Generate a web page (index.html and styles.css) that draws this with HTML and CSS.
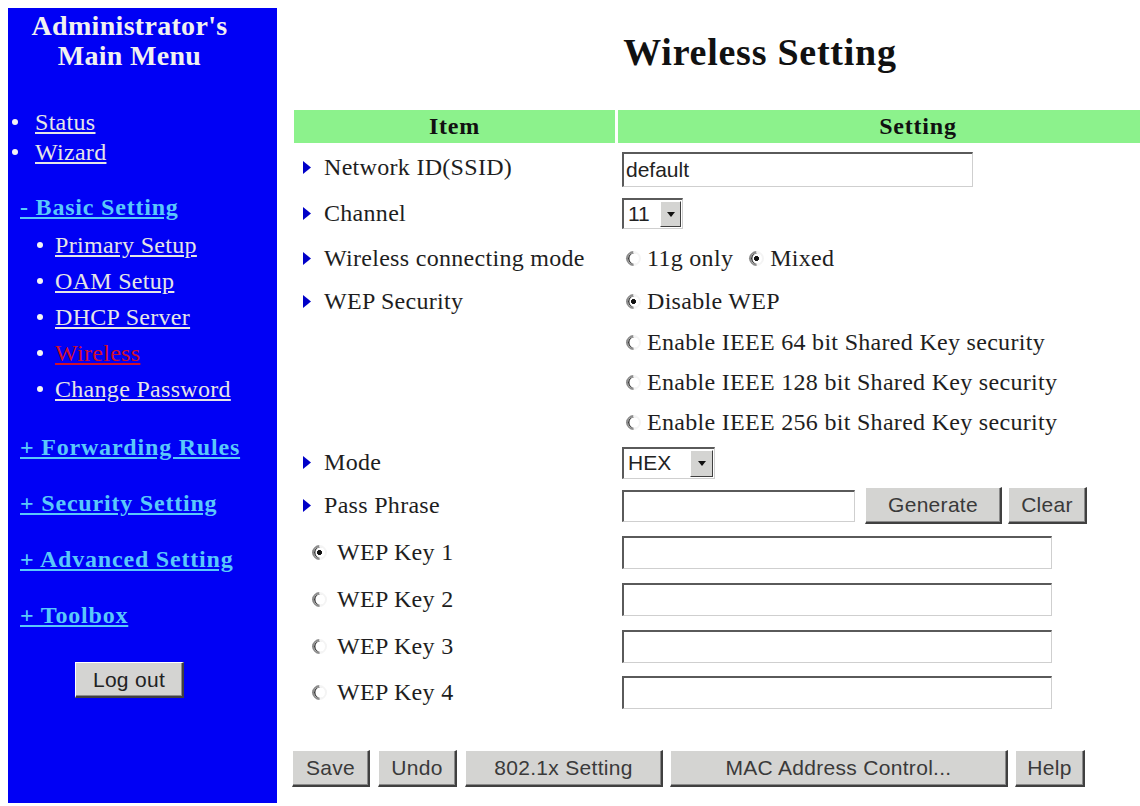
FILE: index.html
```html
<!DOCTYPE html>
<html>
<head>
<meta charset="utf-8">
<title>Wireless Setting</title>
<link rel="stylesheet" href="styles.css">
</head>
<body>
<div class="page">
  <nav class="side">
    <div class="side-inner">
      <h1 class="side-title">Administrator's<br>Main Menu</h1>
      <ul class="menu top-links">
        <li><span class="dot"></span><a href="#">Status</a></li>
        <li><span class="dot"></span><a href="#">Wizard</a></li>
      </ul>
      <a class="sect basic" href="#">- Basic Setting</a>
      <ul class="menu sub-links">
        <li><span class="dot"></span><a href="#">Primary Setup</a></li>
        <li><span class="dot"></span><a href="#">OAM Setup</a></li>
        <li><span class="dot"></span><a href="#">DHCP Server</a></li>
        <li><span class="dot"></span><a class="current" href="#">Wireless</a></li>
        <li><span class="dot"></span><a href="#">Change Password</a></li>
      </ul>
      <div class="sections">
        <a class="sect" href="#">+ Forwarding Rules</a>
        <a class="sect" href="#">+ Security Setting</a>
        <a class="sect" href="#">+ Advanced Setting</a>
        <a class="sect" href="#">+ Toolbox</a>
      </div>
      <div class="logout-wrap"><button class="btn logout" type="button">Log out</button></div>
    </div>
  </nav>

  <main class="main">
    <h2 class="title">Wireless Setting</h2>
    <div class="grid">
      <div class="row head"><div class="c1">Item</div><div class="c2">Setting</div></div>

      <div class="row h48">
        <div class="c1"><svg class="arrow" width="8" height="13" viewBox="0 0 8 13"><polygon points="0,0 8,6.5 0,13"/></svg>Network ID(SSID)</div>
        <div class="c2"><input class="field ssid" type="text" value="default"></div>
      </div>

      <div class="row h45">
        <div class="c1"><svg class="arrow" width="8" height="13" viewBox="0 0 8 13"><polygon points="0,0 8,6.5 0,13"/></svg>Channel</div>
        <div class="c2"><span class="select ch"><span class="sel-text">11</span><span class="sel-btn"><svg width="8" height="5" viewBox="0 0 8 5"><polygon points="0,0 8,0 4,5"/></svg></span></span></div>
      </div>

      <div class="row h44">
        <div class="c1"><svg class="arrow" width="8" height="13" viewBox="0 0 8 13"><polygon points="0,0 8,6.5 0,13"/></svg>Wireless connecting mode</div>
        <div class="c2">
          <label class="opt"><input class="radio" type="radio" name="gmode">11g only</label>
          <label class="opt"><input class="radio" type="radio" name="gmode" checked>Mixed</label>
        </div>
      </div>

      <div class="row h42">
        <div class="c1"><svg class="arrow" width="8" height="13" viewBox="0 0 8 13"><polygon points="0,0 8,6.5 0,13"/></svg>WEP Security</div>
        <div class="c2"><label class="opt"><input class="radio" type="radio" name="wep" checked>Disable WEP</label></div>
      </div>
      <div class="row h40">
        <div class="c1"></div>
        <div class="c2"><label class="opt"><input class="radio" type="radio" name="wep">Enable IEEE 64 bit Shared Key security</label></div>
      </div>
      <div class="row h40">
        <div class="c1"></div>
        <div class="c2"><label class="opt"><input class="radio" type="radio" name="wep">Enable IEEE 128 bit Shared Key security</label></div>
      </div>
      <div class="row h40">
        <div class="c1"></div>
        <div class="c2"><label class="opt"><input class="radio" type="radio" name="wep">Enable IEEE 256 bit Shared Key security</label></div>
      </div>

      <div class="row h41">
        <div class="c1"><svg class="arrow" width="8" height="13" viewBox="0 0 8 13"><polygon points="0,0 8,6.5 0,13"/></svg>Mode</div>
        <div class="c2"><span class="select hex"><span class="sel-text">HEX</span><span class="sel-btn"><svg width="8" height="5" viewBox="0 0 8 5"><polygon points="0,0 8,0 4,5"/></svg></span></span></div>
      </div>

      <div class="row h45">
        <div class="c1"><svg class="arrow" width="8" height="13" viewBox="0 0 8 13"><polygon points="0,0 8,6.5 0,13"/></svg>Pass Phrase</div>
        <div class="c2">
          <input class="field pass" type="text" value="">
          <button class="btn gen" type="button">Generate</button>
          <button class="btn clr" type="button">Clear</button>
        </div>
      </div>

      <div class="row h48">
        <div class="c1 key"><label class="opt"><input class="radio" type="radio" name="key" checked>WEP Key 1</label></div>
        <div class="c2"><input class="field key-in" type="text" value=""></div>
      </div>
      <div class="row h47">
        <div class="c1 key"><label class="opt"><input class="radio" type="radio" name="key">WEP Key 2</label></div>
        <div class="c2"><input class="field key-in" type="text" value=""></div>
      </div>
      <div class="row h46">
        <div class="c1 key"><label class="opt"><input class="radio" type="radio" name="key">WEP Key 3</label></div>
        <div class="c2"><input class="field key-in" type="text" value=""></div>
      </div>
      <div class="row h46">
        <div class="c1 key"><label class="opt"><input class="radio" type="radio" name="key">WEP Key 4</label></div>
        <div class="c2"><input class="field key-in" type="text" value=""></div>
      </div>
    </div>

    <div class="actions">
      <button class="btn b-save" type="button">Save</button>
      <button class="btn b-undo" type="button">Undo</button>
      <button class="btn b-8021x" type="button">802.1x Setting</button>
      <button class="btn b-mac" type="button">MAC Address Control...</button>
      <button class="btn b-help" type="button">Help</button>
    </div>
  </main>
</div>
</body>
</html>
```

FILE: styles.css
```css
html, body {
  margin: 0;
  padding: 0;
}
body {
  margin: 8px 0 0 8px;
  background: #ffffff;
  font-family: "Liberation Serif", "Times New Roman", serif;
  color: #1e1e1e;
}
.page {
  display: flex;
  align-items: flex-start;
}

/* ---------- sidebar ---------- */
.side {
  flex: none;
  width: 269px;
  height: 795px;
  background: #0000f5;
}
.side-inner {
  width: 243px;
  padding-top: 3px;
}
.side-title {
  margin: 0;
  font-size: 28px;
  line-height: 30px;
  font-weight: bold;
  text-align: center;
  letter-spacing: 0.3px;
  color: #f0f0f0;
}
.menu {
  list-style: none;
  margin: 0;
  padding: 0;
  font-size: 24px;
  letter-spacing: 0.3px;
}
.menu li {
  display: flex;
  align-items: center;
}
.menu a {
  color: #e6e6e6;
  text-decoration: underline;
}
.menu a.current {
  color: #d0102a;
}
.dot {
  flex: none;
  width: 6px;
  height: 6px;
  border-radius: 50%;
  background: #f4f4f4;
}
.top-links {
  margin-top: 36px;
}
.top-links li {
  height: 30px;
}
.top-links .dot {
  margin-left: 4px;
  margin-right: 17px;
}
.sect {
  display: block;
  margin-left: 12px;
  font-size: 24px;
  font-weight: bold;
  letter-spacing: 0.8px;
  color: #5ac8fa;
  text-decoration: underline;
}
.basic {
  margin-top: 25px;
  line-height: 30px;
}
.sub-links {
  margin-top: 5px;
}
.sub-links li {
  height: 36px;
}
.sub-links .dot {
  margin-left: 29px;
  margin-right: 12px;
}
.sections {
  margin-top: 12px;
}
.sections .sect {
  line-height: 56px;
}
.logout-wrap {
  margin-top: 19px;
  text-align: center;
}

/* ---------- buttons ---------- */
.btn {
  box-sizing: border-box;
  height: 37px;
  padding: 0;
  background: #d4d4d2;
  border-top: 1px solid #ffffff;
  border-left: 1px solid #ffffff;
  border-right: 2px solid #404040;
  border-bottom: 2px solid #404040;
  box-shadow: inset -1px -1px 0 #8a8a8a;
  font-family: "Liberation Sans", Arial, sans-serif;
  font-size: 21px;
  letter-spacing: 0.3px;
  color: #3a3a3a;
}
.logout {
  width: 109px;
  height: 36px;
  color: #222222;
}

/* ---------- main ---------- */
.main {
  flex: 1;
  min-width: 0;
  margin-left: 15px;
}
.title {
  margin: 21px 0 0;
  padding-left: 88px;
  font-size: 38px;
  line-height: 46px;
  font-weight: bold;
  text-align: center;
  letter-spacing: 0.75px;
  color: #111111;
}
.grid {
  margin-top: 35px;
  padding-left: 2px;
}
.row {
  display: flex;
  gap: 3px;
  font-size: 24px;
  letter-spacing: 0.3px;
}
.c1 {
  flex: none;
  width: 321px;
  box-sizing: border-box;
  padding-left: 9px;
  display: flex;
  align-items: center;
}
.c1.key {
  padding-left: 18px;
}
.c2 {
  flex: 1;
  min-width: 0;
  display: flex;
  align-items: center;
  padding-left: 4px;
}
.head {
  height: 33px;
}
.head .c1,
.head .c2 {
  justify-content: center;
  padding: 0;
  background: #8cf28c;
  font-weight: bold;
  letter-spacing: 0.8px;
  color: #111111;
}
.head .c2 {
  padding-left: 78px;
}
.h40 { height: 40px; }
.h41 { height: 41px; }
.h42 { height: 42px; }
.h44 { height: 44px; }
.h45 { height: 45px; }
.h46 { height: 46px; }
.h47 { height: 47px; }
.h48 { height: 48px; }

.arrow {
  flex: none;
  margin-right: 13px;
  fill: #0000c8;
}

.opt {
  display: inline-flex;
  align-items: center;
  margin-right: 12px;
}
.radio {
  -webkit-appearance: none;
  appearance: none;
  flex: none;
  box-sizing: border-box;
  width: 15px;
  height: 15px;
  margin: 0 6px 0 4px;
  border-radius: 50%;
  border: 2px solid;
  border-color: #8c8c8c #f4f4f4 #f4f4f4 #8c8c8c;
  box-shadow: inset 1px 1px 0 #3c3c3c;
  background: #ffffff;
  transform: rotate(-45deg);
}
.radio:checked {
  background: radial-gradient(circle, #111111 0 2.2px, #ffffff 2.8px);
}
.c1.key .radio {
  margin-left: 0;
  margin-right: 10px;
}

.field {
  box-sizing: border-box;
  margin: 0;
  padding: 0 0 0 2px;
  background: #ffffff;
  border-top: 2px solid #5a5a5a;
  border-left: 2px solid #5a5a5a;
  border-right: 1px solid #cfcfcf;
  border-bottom: 1px solid #cfcfcf;
  font-family: "Liberation Sans", Arial, sans-serif;
  font-size: 21px;
  color: #222222;
  outline: none;
}
.ssid {
  width: 351px;
  height: 35px;
  margin-top: 4px;
}
.pass {
  width: 233px;
  height: 32px;
  margin-right: 10px;
}
.gen {
  width: 137px;
  margin-right: 6px;
}
.clr {
  width: 79px;
}
.key-in {
  width: 430px;
  height: 33px;
}

.select {
  display: inline-flex;
  box-sizing: border-box;
  background: #ffffff;
  border-top: 2px solid #5a5a5a;
  border-left: 2px solid #5a5a5a;
  border-right: 1px solid #cfcfcf;
  border-bottom: 1px solid #cfcfcf;
  font-family: "Liberation Sans", Arial, sans-serif;
  font-size: 21px;
  color: #222222;
  letter-spacing: 0;
}
.select.ch {
  width: 61px;
  height: 31px;
}
.select.hex {
  width: 93px;
  height: 32px;
}
.sel-text {
  flex: 1;
  padding-left: 4px;
  line-height: 27px;
}
.sel-btn {
  flex: none;
  box-sizing: border-box;
  width: 21px;
  margin: 1px;
  display: flex;
  align-items: center;
  justify-content: center;
  background: #d4d4d2;
  border-top: 1px solid #ffffff;
  border-left: 1px solid #ffffff;
  border-right: 1px solid #404040;
  border-bottom: 1px solid #404040;
  fill: #111111;
}
.select.hex .sel-btn {
  width: 23px;
}

.actions {
  display: flex;
  gap: 7px;
  margin-top: 35px;
}
.b-save { width: 78px; }
.b-undo { width: 79px; margin-left: 1px; }
.b-8021x { width: 198px; margin-left: 1px; }
.b-mac { width: 338px; }
.b-help { width: 70px; }
```
